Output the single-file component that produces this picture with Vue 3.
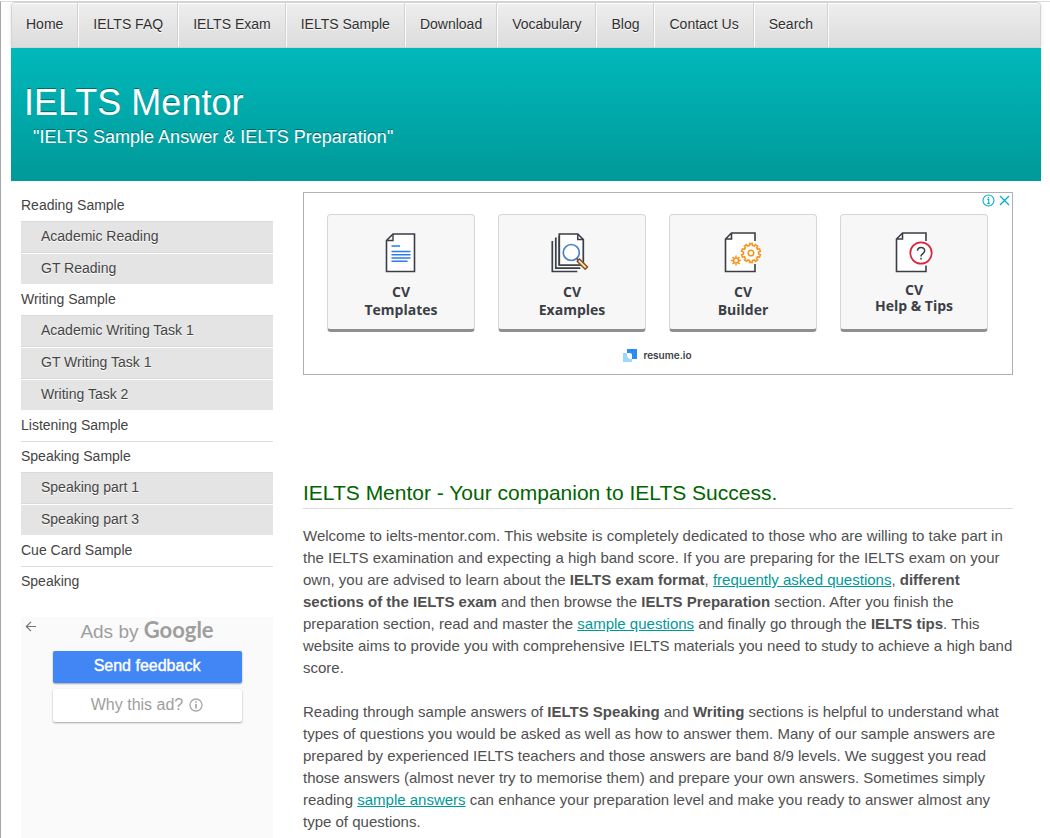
<script setup>
const nav = ['Home', 'IELTS FAQ', 'IELTS Exam', 'IELTS Sample', 'Download', 'Vocabulary', 'Blog', 'Contact Us', 'Search']

const menu = [
  { label: 'Reading Sample', children: ['Academic Reading', 'GT Reading'] },
  { label: 'Writing Sample', children: ['Academic Writing Task 1', 'GT Writing Task 1', 'Writing Task 2'] },
  { label: 'Listening Sample', children: [] },
  { label: 'Speaking Sample', children: ['Speaking part 1', 'Speaking part 3'] },
  { label: 'Cue Card Sample', children: [] },
  { label: 'Speaking', children: [] }
]

function gear(cx, cy, teeth, outer, inner) {
  const step = (Math.PI * 2) / teeth
  const points = []
  for (let i = 0; i < teeth; i++) {
    const a = i * step - Math.PI / 2
    for (const [offset, r] of [[-0.3, inner], [-0.22, outer], [0.22, outer], [0.3, inner]]) {
      points.push(`${(cx + r * Math.cos(a + offset * step)).toFixed(2)} ${(cy + r * Math.sin(a + offset * step)).toFixed(2)}`)
    }
  }
  return `M${points.join('L')}Z`
}

const bigGear = gear(30, 22, 10, 9.5, 7.6)
const spokes = Array.from({ length: 8 }, (_, i) => {
  const a = (i * Math.PI) / 4
  const x = Math.cos(a)
  const y = Math.sin(a)
  return `M${(15 + 3 * x).toFixed(2)} ${(29.5 + 3 * y).toFixed(2)}L${(15 + 5 * x).toFixed(2)} ${(29.5 + 5 * y).toFixed(2)}`
}).join('')
</script>

<template>
  <div class="page">
    <nav class="topnav" aria-label="Main">
      <ul>
        <li v-for="item in nav" :key="item"><a href="#">{{ item }}</a></li>
      </ul>
    </nav>

    <header class="banner">
      <h1>IELTS Mentor</h1>
      <p>"IELTS Sample Answer &amp; IELTS Preparation"</p>
    </header>

    <div class="columns">
      <aside class="sidebar">
        <ul class="menu">
          <li v-for="group in menu" :key="group.label" class="group">
            <a href="#">{{ group.label }}</a>
            <ul v-if="group.children.length" class="submenu">
              <li v-for="child in group.children" :key="child"><a href="#">{{ child }}</a></li>
            </ul>
          </li>
        </ul>

        <section class="feedback" aria-label="Ad feedback">
          <button class="back" type="button" aria-label="Back">
            <svg width="12" height="12" viewBox="0 0 12 12" fill="none" stroke="#757575" stroke-width="1.2">
              <path d="M11 5.500H1.500M6 .8 1.300 5.500 6 10.200" />
            </svg>
          </button>
          <div class="adsby">Ads by <span>Google</span></div>
          <button class="send" type="button">Send feedback</button>
          <button class="why" type="button">
            Why this ad?
            <svg width="14" height="14" viewBox="0 0 14 14" fill="none" stroke="#a8a8a8">
              <circle cx="7" cy="7" r="6" stroke-width="1.3" />
              <path d="M7 6v4.600M7 3.200v1.600" stroke-width="1.8" />
            </svg>
          </button>
        </section>
      </aside>

      <main class="content">
        <section class="ad" aria-label="Advertisement">
          <div class="adcontrols">
            <button type="button" aria-label="Ad information">
              <svg width="13" height="13" viewBox="0 0 13 13" fill="none" stroke="#00aecd">
                <circle cx="6.5" cy="6.5" r="5.5" stroke-width="1.1" />
                <path d="M5.3 5.4h1.4v4M5.2 9.5h2.8M6.5 3v1.3" stroke-width="1.1" />
              </svg>
            </button>
            <button type="button" aria-label="Close ad">
              <svg width="11" height="11" viewBox="0 0 11 11" fill="none" stroke="#00aecd" stroke-width="1.3">
                <path d="M1 1l9 9M10 1l-9 9" />
              </svg>
            </button>
          </div>

          <div class="cards">
            <a class="card" href="#">
              <svg width="44" height="44" viewBox="0 0 44 44" fill="none">
                <path d="M14 3h21.500v37.500h-28V9.500z" fill="#fff" stroke="#3b3e46" stroke-width="1.600" />
                <path d="M14 3v6.500H7.500" stroke="#3b3e46" stroke-width="1.400" />
                <path d="M12.500 15h8.500M12.500 20.500h19M12.500 23.800h19M12.500 27h19M12.500 30.300h16" stroke="#2b7bf0" stroke-width="1.500" />
              </svg>
              <span>CV<br>Templates</span>
            </a>
            <a class="card" href="#">
              <svg width="44" height="44" viewBox="0 0 44 44" fill="none">
                <path d="M2.300 10v30.500h25M5.800 6.500v30.700h24.500M9.300 5v29h23" stroke="#3b3e46" stroke-width="1.700" />
                <path d="M9.300 3h18.500l5.500 5.500V34h-24z" fill="#fff" stroke="#3b3e46" stroke-width="1.700" />
                <path d="M27.800 3v5.500h5.500" stroke="#3b3e46" stroke-width="1.500" />
                <circle cx="21.300" cy="21.500" r="8" fill="#fff" stroke="#4a80c8" stroke-width="1.700" />
                <path d="M26.800 27.500l2.500 2.500" stroke="#3b3e46" stroke-width="1.600" />
                <path d="M29.500 28l8 8-2.300 2.300-8-8z" fill="#f5e7d6" stroke="#8a5310" stroke-width="1.500" />
              </svg>
              <span>CV<br>Examples</span>
            </a>
            <a class="card" href="#">
              <svg width="44" height="44" viewBox="0 0 44 44" fill="none">
                <path d="M10.500 2H34v38.500H4.500V8z" fill="#fff" />
                <path d="M34 10V2H10.500l-6 6v32.500H34v-7.500M10.500 2v6h-6" stroke="#3b3e46" stroke-width="1.600" />
                <path :d="bigGear" fill="#fff" stroke="#f7941d" stroke-width="1.600" />
                <circle cx="30" cy="22" r="2.800" stroke="#f7941d" stroke-width="1.500" />
                <circle cx="15" cy="29.500" r="2.500" stroke="#f7941d" stroke-width="1.500" />
                <path :d="spokes" stroke="#f7941d" stroke-width="1.500" />
              </svg>
              <span>CV<br>Builder</span>
            </a>
            <a class="card tight" href="#">
              <svg width="44" height="44" viewBox="0 0 44 44" fill="none">
                <path d="M10.500 2H34v38.500H4.500V8z" fill="#fff" />
                <path d="M34 10V2H10.500l-6 6v32.500H34v-6M10.500 2v6h-6" stroke="#3b3e46" stroke-width="1.600" />
                <circle cx="29" cy="22" r="10.700" fill="#fff" stroke="#dc2339" stroke-width="1.700" />
                <path d="M25.500 19.800c.2-4.400 7.300-4.200 7.200 0 0 2.900-3.700 2.600-3.700 5.600M29 26.800v1.800" stroke="#3b3e46" stroke-width="1.500" />
              </svg>
              <span>CV<br>Help &amp; Tips</span>
            </a>
          </div>

          <a class="brand" href="#">
            <svg width="14" height="13" viewBox="0 0 14 13">
              <path d="M4 0h10v10H4z" fill="#2a8bf2" />
              <path d="M0 4h4.500q4.500 0 4.500 5v4H0z" fill="#9fd6fb" />
              <path d="M4 4h3q2 0 2 2v4H7Q4 9 4 6z" fill="#fff" />
            </svg>
            resume.io
          </a>
        </section>

        <article>
          <h2>IELTS Mentor - Your companion to IELTS Success.</h2>
          <p>
            Welcome to ielts-mentor.com. This website is completely dedicated to those who are willing to take part in
            the IELTS examination and expecting a high band score. If you are preparing for the IELTS exam on your own,
            you are advised to learn about the <strong>IELTS exam format</strong>,
            <a href="#">frequently asked questions</a>, <strong>different sections of the IELTS exam</strong> and then
            browse the <strong>IELTS Preparation</strong> section. After you finish the preparation section, read and
            master the <a href="#">sample questions</a> and finally go through the <strong>IELTS tips</strong>. This
            website aims to provide you with comprehensive IELTS materials you need to study to achieve a high band
            score.
          </p>
          <p>
            Reading through sample answers of <strong>IELTS Speaking</strong> and <strong>Writing</strong> sections is
            helpful to understand what types of questions you would be asked as well as how to answer them. Many of our
            sample answers are prepared by experienced IELTS teachers and those answers are band 8/9 levels. We suggest
            you read those answers (almost never try to memorise them) and prepare your own answers. Sometimes simply
            reading <a href="#">sample answers</a> can enhance your preparation level and make you ready to answer
            almost any type of questions.
          </p>
        </article>
      </main>
    </div>
  </div>
</template>

<style>
body {
  background: #fff;
  border-top: 1px solid #fff;
}
</style>

<style scoped>
* {
  box-sizing: border-box;
}

ul {
  list-style: none;
  margin: 0;
  padding: 0;
}

button {
  font-family: inherit;
  cursor: pointer;
}

svg {
  display: block;
}

.page {
  display: flex;
  flex-direction: column;
  min-height: calc(100vh - 1px);
  padding: 0 9px 0 10px;
  border-top: 1px solid #ddd;
  border-left: 1px solid #a6a6a6;
  font-family: "Liberation Sans", Arial, sans-serif;
  font-size: 14px;
  color: #505050;
}

.topnav {
  border: 1px solid #d3d3d3;
  border-radius: 4px 4px 0 0;
  background: linear-gradient(#eee, #dcdcdc);
  box-shadow: inset 0 1px 0 #fff, 0 0 4px rgba(0, 0, 0, 0.1);
}

.topnav ul {
  display: flex;
}

.topnav li {
  border-right: 1px solid #d3d3d3;
}

.topnav li + li,
.topnav ul::after {
  border-left: 1px solid #fafafa;
}

.topnav ul::after {
  content: "";
}

.topnav a {
  display: block;
  padding: 0 14px 2px;
  line-height: 42px;
  color: #303030;
  text-decoration: none;
  text-shadow: 0 1px 0 #fff;
}

.banner {
  height: 133px;
  padding: 35px 13px 0;
  background: linear-gradient(#00b8ba, #009999);
  color: #fff;
  text-shadow: 0 -1px 0 rgba(0, 0, 0, 0.4);
}

.banner h1 {
  margin: 0;
  font-size: 36px;
  font-weight: 400;
  line-height: 40px;
}

.banner p {
  margin: 3px 0 0 9px;
  font-size: 18px;
  line-height: 22px;
}

.columns {
  flex: 1;
  display: grid;
  grid-template-columns: 252px 1fr;
  gap: 30px;
  padding: 9px 28px 0 10px;
}

.sidebar {
  display: flex;
  flex-direction: column;
}

.menu a {
  display: block;
  padding-bottom: 2px;
  line-height: 28px;
  color: #444;
  text-decoration: none;
}

.group {
  border-top: 1px solid #ddd;
}

.group:first-child,
.group:has(.submenu) + .group {
  border-top-color: transparent;
}

.submenu {
  border-top: 1px solid #dadada;
  background: #e4e4e4;
}

.submenu a {
  padding-left: 20px;
  text-shadow: 0 1px 0 #fff;
}

.submenu li + li {
  border-top: 1px solid #fff;
}

.submenu li:not(:last-child) {
  border-bottom: 1px solid #dadada;
}

.feedback {
  position: relative;
  flex: 1;
  display: flex;
  flex-direction: column;
  align-items: center;
  margin-top: 20px;
  background: #fafafa;
}

.back {
  position: absolute;
  top: 4px;
  left: 4px;
  padding: 0;
  border: 0;
  background: none;
}

.adsby {
  margin-bottom: 4px;
  font-size: 19px;
  line-height: 30px;
  color: #9e9e9e;
}

.adsby span {
  font-family: Lato, sans-serif;
  font-size: 22px;
  font-weight: 700;
  line-height: 22px;
}

.send,
.why {
  display: flex;
  align-items: center;
  justify-content: center;
  gap: 6px;
  width: 75%;
  height: 32px;
  padding-bottom: 3px;
  border: 0;
  border-radius: 2px;
  background: #4285f4;
  box-shadow: 0 1px 2px rgba(0, 0, 0, 0.35);
  color: #fff;
  font-size: 16px;
}

.send {
  -webkit-text-stroke: 0.4px #fff;
}

.why {
  height: 33px;
  margin-top: 6px;
  background: #fff;
  color: #9e9e9e;
}

.content {
  padding-top: 2px;
}

.ad {
  position: relative;
  height: 183px;
  padding: 21px 24px 0 23px;
  border: 1px solid #b0b0b0;
  font-family: "Open Sans", "Noto Sans", sans-serif;
}

.adcontrols {
  position: absolute;
  top: 1px;
  right: 2px;
  display: flex;
  align-items: center;
  gap: 4px;
}

.adcontrols button {
  padding: 0;
  border: 0;
  background: none;
}

.cards {
  display: grid;
  grid-template-columns: repeat(4, 1fr);
  gap: 23px;
}

.card {
  display: flex;
  flex-direction: column;
  align-items: center;
  gap: 8px;
  height: 118px;
  padding-top: 16px;
  border: 1px solid #d6d6d6;
  border-bottom: 3px solid #8f8f8f;
  border-radius: 4px;
  background: #f7f7f7;
  color: #3b3e46;
  font-size: 14px;
  font-weight: 700;
  line-height: 18px;
  text-align: center;
  text-decoration: none;
}

.card.tight {
  gap: 7px;
  line-height: 16px;
}

.brand {
  display: flex;
  align-items: center;
  justify-content: center;
  gap: 6px;
  margin-top: 15px;
  color: #3b3e46;
  font-family: Inter, sans-serif;
  font-size: 10px;
  font-weight: 600;
  line-height: 16px;
  text-decoration: none;
}

article h2 {
  margin: 107px 0 16px;
  padding-bottom: 4px;
  border-bottom: 1px solid #ddd;
  color: #006400;
  font-size: 21px;
  font-weight: 400;
  line-height: 22px;
}

article p {
  margin: 0 0 22px;
  font-size: 15px;
  line-height: 22px;
}

article p:last-child {
  margin-bottom: 0;
}

article a {
  color: #099;
}
</style>
